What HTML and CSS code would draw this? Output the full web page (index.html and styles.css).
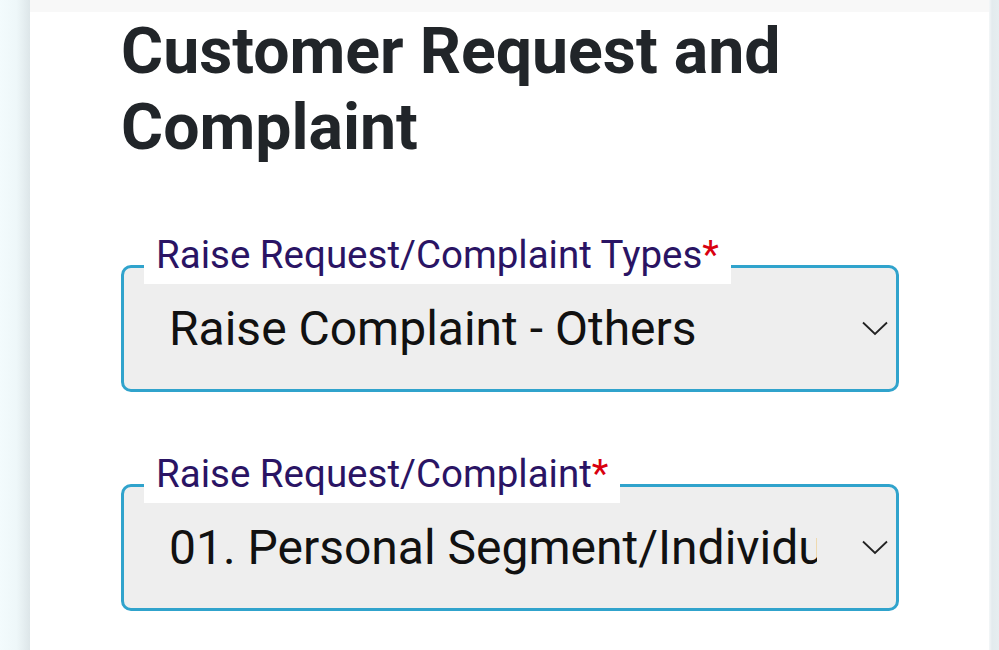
FILE: index.html
```html
<!DOCTYPE html>
<html lang="en">
<head>
<meta charset="utf-8">
<title>Customer Request and Complaint</title>
<link rel="stylesheet" href="styles.css">
</head>
<body>
<div class="page">
  <div class="side side-left"></div>
  <main class="card">
    <div class="card-top"></div>
    <div class="card-body">
      <h1 class="title">Customer Request and Complaint</h1>

      <div class="field">
        <label class="field-label" for="type">Raise Request/Complaint Types<span class="req">*</span></label>
        <select id="type" class="field-select">
          <option>Raise Complaint - Others</option>
        </select>
        <svg class="chevron" width="26" height="15" viewBox="0 0 26 15" aria-hidden="true"><path d="M1 1.5 L13 13 L25 1.5" fill="none" stroke="#222" stroke-width="1.8"/></svg>
      </div>

      <div class="field">
        <label class="field-label" for="sub">Raise Request/Complaint<span class="req">*</span></label>
        <select id="sub" class="field-select">
          <option>01. Personal Segment/Individual</option>
        </select>
        <svg class="chevron" width="26" height="15" viewBox="0 0 26 15" aria-hidden="true"><path d="M1 1.5 L13 13 L25 1.5" fill="none" stroke="#222" stroke-width="1.8"/></svg>
      </div>
    </div>
  </main>
  <div class="side side-right"></div>
</div>
</body>
</html>
```

FILE: styles.css
```css
* { box-sizing: border-box; }

html, body {
  margin: 0;
  padding: 0;
  height: 100%;
  background: #ffffff;
  font-family: Roboto, "Noto Sans", Arial, sans-serif;
}

.page {
  display: flex;
  min-height: 650px;
  width: 999px;
}

.side-left {
  width: 30px;
  flex: none;
  background: linear-gradient(to right, #f3fbfd 0%, #eef7f9 55%, #dde6e9 100%);
}

.side-right {
  width: 10px;
  flex: none;
  background: linear-gradient(to right, #f4f7f8 0%, #e3ebee 30%, #e6eef0 100%);
}

.card {
  flex: 1;
  background: #ffffff;
  display: flex;
  flex-direction: column;
}

.card-top {
  height: 12px;
  background: #f8f8f8;
}

.card-body {
  padding: 1px 0 0 91px;
}

.title {
  margin: 0;
  width: 700px;
  font-size: 64.4px;
  line-height: 76px;
  font-weight: 700;
  color: #212529;
  letter-spacing: 0;
}

.field {
  position: relative;
  width: 778px;
  height: 127px;
  margin-top: 100px;
}

.field + .field {
  margin-top: 92px;
}

.field-select {
  -webkit-appearance: none;
  appearance: none;
  display: block;
  width: 100%;
  height: 100%;
  margin: 0;
  padding: 0 79px 0 45px;
  border: 3px solid #30a3cc;
  border-radius: 10px;
  background: #eeeeee;
  color: #111111;
  font-family: Roboto, "Noto Sans", Arial, sans-serif;
  font-size: 48px;
  outline: none;
}

.field-label {
  position: absolute;
  top: -32px;
  left: 23px;
  padding: 0 12px 7px 12px;
  background: #ffffff;
  color: #2a1464;
  font-size: 38.5px;
  line-height: 44px;
  white-space: nowrap;
  z-index: 1;
}

.req {
  color: #d9000f;
}

.chevron {
  position: absolute;
  right: 11px;
  top: 56px;
  pointer-events: none;
}
```
